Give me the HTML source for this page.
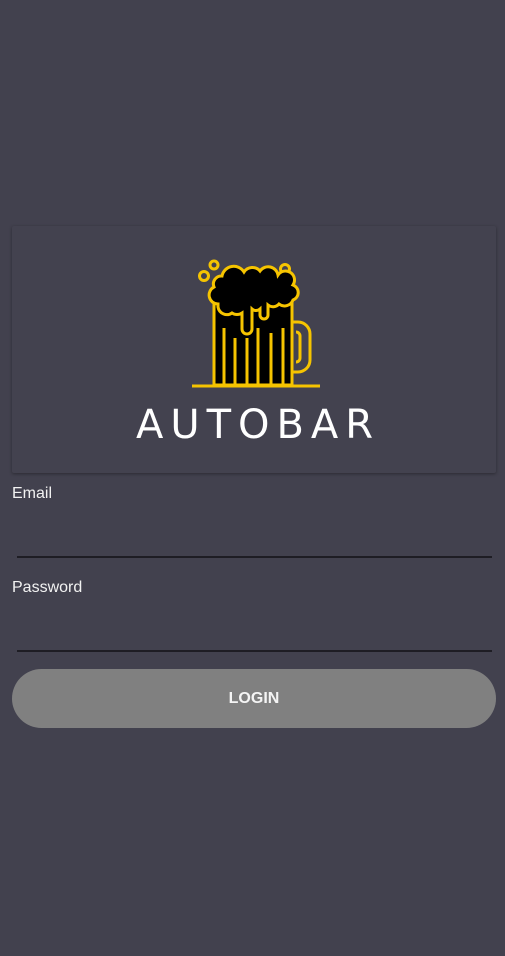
<!DOCTYPE html>
<html><head><meta charset="utf-8"><style>
html,body{margin:0;padding:0;width:505px;height:956px;background:#42414e;overflow:hidden;font-family:"Liberation Sans",sans-serif;}
.card{position:absolute;left:12px;top:226px;width:484px;height:247px;background:#43424f;box-shadow:0 1px 3px rgba(0,0,0,0.35);border-radius:2px;}
.lbl{position:absolute;left:12px;color:#f2f2f2;font-size:16px;}
.line{position:absolute;left:17px;width:475px;height:1.5px;background:#1e1d24;}
.btn{position:absolute;left:12px;top:669px;width:484px;height:59px;border-radius:30px;background:#808080;color:#f4f4f4;font-size:16px;font-weight:bold;text-align:center;line-height:59px;}
</style></head><body>
<div class="card"></div>
<svg style="position:absolute;left:0;top:0" width="505" height="480">
 <g stroke="#f6c400" stroke-width="3" fill="none">
  <circle cx="214" cy="265" r="4"/><circle cx="204" cy="276" r="4.5"/><circle cx="285" cy="269" r="4.5"/>
  <path d="M293 322 h5 a12 12 0 0 1 12 12 v26 a12 12 0 0 1 -12 12 h-5" />
  <path d="M296 332 a4 4 0 0 1 4 4 v22 a4 4 0 0 1 -4 4" />
  <rect x="214" y="300" width="78" height="85" fill="#000"/>
  <line x1="192" y1="386" x2="320" y2="386"/>
 </g>
 <g stroke="#f6c400" stroke-width="3">
  <line x1="224" y1="328" x2="224" y2="385"/><line x1="235" y1="338" x2="235" y2="385"/>
  <line x1="247" y1="338" x2="247" y2="385"/><line x1="258" y1="328" x2="258" y2="385"/>
  <line x1="271" y1="333" x2="271" y2="385"/><line x1="283" y1="328" x2="283" y2="385"/>
 </g>
 <path d="M218 304 a9 9 0 0 1 -4 -17 a8 8 0 0 1 8 -11 a12 12 0 0 1 22 -4 a10 10 0 0 1 16 -1 a10 10 0 0 1 18 4 a9 9 0 0 1 15 10 a8 8 0 0 1 0 15 a9 9 0 0 1 -14 4 a8 8 0 0 1 -11 1 v10 a4 4 0 0 1 -8 0 v-6 a6 6 0 0 1 -8 0 v20 a5 5 0 0 1 -10 0 v-16 a9 9 0 0 1 -10 0 a9 9 0 0 1 -14 -6 z" fill="#000" stroke="#f6c400" stroke-width="3"/>
 <text x="136" y="438" textLength="237" lengthAdjust="spacing" fill="#fff" font-family="DejaVu Sans" font-size="40">AUTOBAR</text>
</svg>
<div class="lbl" style="top:485px">Email</div>
<div class="line" style="top:556px"></div>
<div class="lbl" style="top:579px">Password</div>
<div class="line" style="top:650px"></div>
<div class="btn">LOGIN</div>
</body></html>
